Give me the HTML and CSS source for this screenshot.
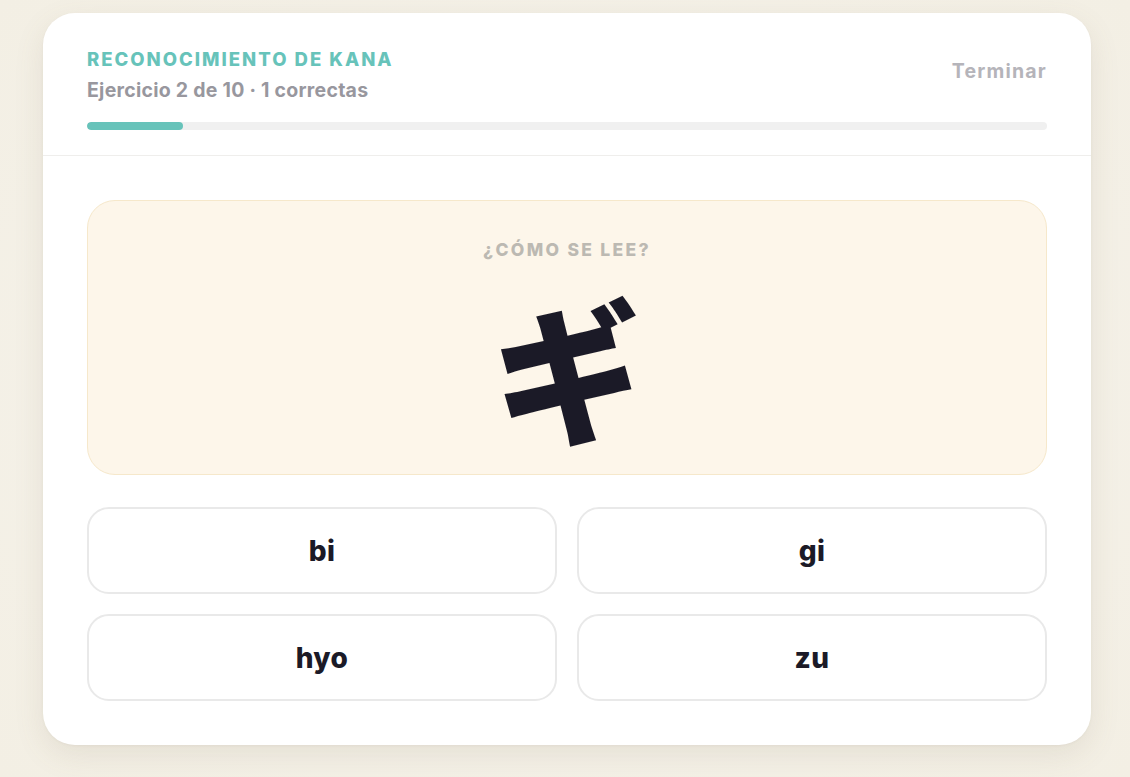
FILE: index.html
```html
<!DOCTYPE html>
<html lang="es">
<head>
<meta charset="utf-8">
<title>Reconocimiento de kana</title>
<link rel="stylesheet" href="styles.css">
</head>
<body>
<main class="card">
  <header class="card-head">
    <div class="head-row">
      <div class="head-text">
        <div class="title">RECONOCIMIENTO DE KANA</div>
        <div class="subtitle">Ejercicio 2 de 10 · 1 correctas</div>
      </div>
      <button class="finish">Terminar</button>
    </div>
    <div class="progress"><div class="progress-fill" style="width:10%"></div></div>
  </header>
  <section class="card-body">
    <div class="prompt">
      <div class="prompt-label">¿CÓMO SE LEE?</div>
      <div class="kana" lang="ja">ギ</div>
    </div>
    <div class="options">
      <button class="option">bi</button>
      <button class="option">gi</button>
      <button class="option">hyo</button>
      <button class="option">zu</button>
    </div>
  </section>
</main>
</body>
</html>
```

FILE: styles.css
```css
* { box-sizing: border-box; }
html, body { margin: 0; height: 100%; }
body {
  background: radial-gradient(ellipse at center, #f6f3ec 0%, #f3efe4 100%);
  font-family: "Inter", "Noto Sans", sans-serif;
  padding: 13px 39px 32px 43px;
}
.card {
  background: #ffffff;
  border-radius: 32px;
  box-shadow: 0 10px 30px rgba(120, 110, 80, 0.12), 0 1px 3px rgba(0,0,0,0.04);
  width: 1048px;
  height: 732px;
  display: flex;
  flex-direction: column;
}
.card-head {
  padding: 33px 44px 25px 44px;
  border-bottom: 1px solid #efeeec;
}
.head-row {
  display: flex;
  justify-content: space-between;
  align-items: flex-start;
}
.title {
  color: #67c3ba;
  font-weight: 800;
  font-size: 18.5px;
  letter-spacing: 2px;
  line-height: 24px;
  margin-top: 1px;
}
.subtitle {
  color: #98979e;
  font-weight: 700;
  font-size: 19.5px;
  line-height: 24px;
  margin-top: 7px;
  letter-spacing: 0.25px;
}
.finish {
  border: 0;
  background: none;
  padding: 0;
  margin-top: 13px;
  font-family: inherit;
  font-weight: 700;
  font-size: 19.5px;
  color: #b5b4ba;
  line-height: 24px;
  letter-spacing: 1.2px;
}
.progress {
  margin-top: 20px;
  height: 8px;
  border-radius: 4px;
  background: #f0f0f0;
  overflow: hidden;
}
.progress-fill {
  height: 100%;
  background: #67c3ba;
  border-radius: 4px;
}
.card-body {
  padding: 44px 44px 44px 44px;
  display: flex;
  flex-direction: column;
  gap: 32px;
}
.prompt {
  background: #fdf6ea;
  border: 1px solid #f6e8cb;
  border-radius: 28px;
  height: 275px;
  display: flex;
  flex-direction: column;
  align-items: center;
  padding-top: 37px;
}
.prompt-label {
  color: #bcb9b2;
  font-weight: 800;
  font-size: 17.5px;
  letter-spacing: 2.3px;
  line-height: 24px;
}
.kana {
  font-family: "Noto Sans CJK JP", sans-serif;
  font-weight: 900;
  font-size: 152px;
  line-height: 152px;
  color: #1b1a27;
  margin-top: 29px;
  margin-left: 2px;
  transform: rotate(-4deg);
}
.options {
  display: grid;
  grid-template-columns: 1fr 1fr;
  gap: 20px 20px;
}
.option {
  height: 87px;
  background: #ffffff;
  border: 2px solid #e9e9e9;
  border-radius: 22px;
  font-family: inherit;
  font-weight: 800;
  font-size: 28px;
  color: #1b1a27;
  letter-spacing: 0.4px;
}
```
